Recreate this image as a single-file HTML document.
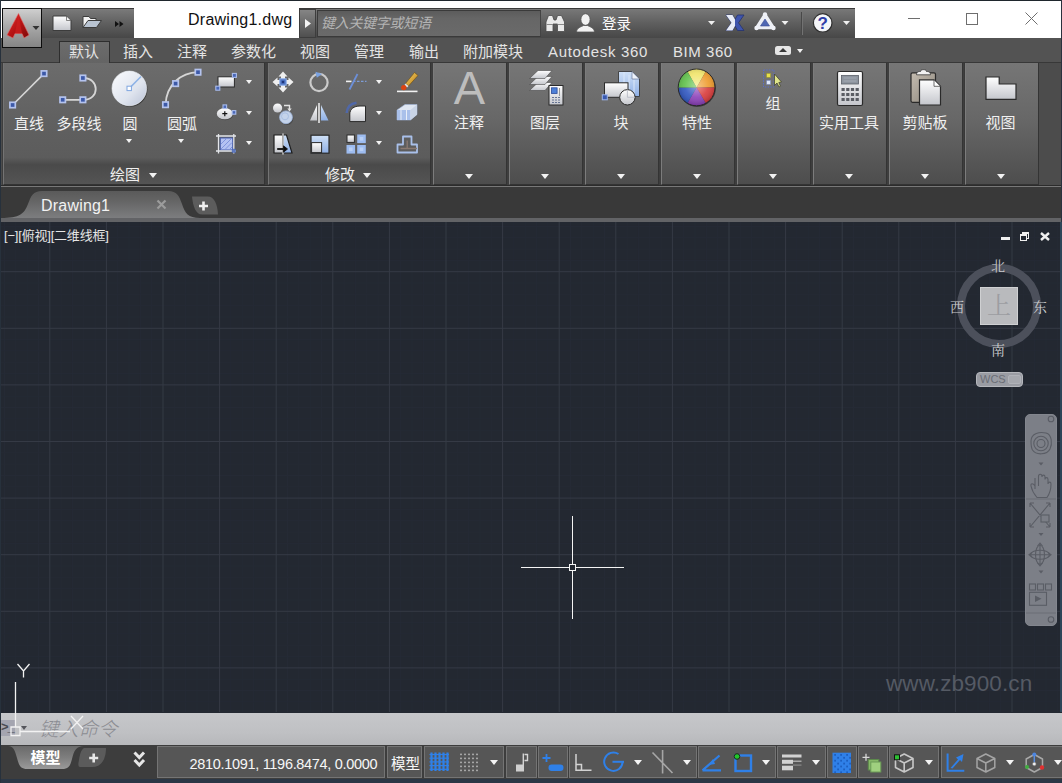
<!DOCTYPE html>
<html lang="zh-CN">
<head>
<meta charset="utf-8">
<title>Drawing1.dwg</title>
<style>
*{box-sizing:border-box;margin:0;padding:0}
html,body{width:1062px;height:783px;overflow:hidden;background:#fff}
body{position:relative;font-family:"Liberation Sans","Noto Sans CJK SC",sans-serif;color:#e8e8e8;font-size:15px}
.abs{position:absolute}
svg{position:absolute;overflow:visible}
/* ---------- title bar ---------- */
#topline{left:0;top:0;width:1062px;height:1px;background:#1f272d}
#leftline{left:0;top:0;width:1px;height:783px;background:#27313c}
#appbtn{left:2px;top:8px;width:40px;height:40px;border:1px solid #0c0c0c;background:linear-gradient(#cfcfcf,#a9a9a9 45%,#858585);z-index:5}
#qat{left:42px;top:8px;width:92px;height:30px;background:linear-gradient(#7a7a7a,#5f5f5f 50%,#474747);border-top:1px solid #3a3a3a}
#title{left:188px;top:9px;height:22px;line-height:22px;font-size:16px;color:#111;white-space:nowrap;letter-spacing:0.25px}
#info{left:299px;top:8px;width:556px;height:30px;background:linear-gradient(#787878,#5e5e5e 50%,#474747);border-top:1px solid #3a3a3a}
#sarrow{left:299px;top:9px;width:17px;height:29px;background:linear-gradient(#858585,#6a6a6a 50%,#4f4f4f);border:1px solid #3d3d3d}
#sbox{left:317px;top:10px;width:224px;height:27px;background:linear-gradient(#5c5c5c,#666 30%,#6a6a6a);border:1px solid #3a3a3a;border-right-color:#444}
#stext{left:321px;top:12px;height:22px;line-height:22px;font-size:14px;font-style:italic;color:#b4b4b4;white-space:nowrap;letter-spacing:-0.3px}
/* ---------- ribbon tabs ---------- */
#tabrow{left:1px;top:38px;width:1061px;height:25px;background:#535353;border-bottom:1px solid #383838}
.rt{position:absolute;top:41px;height:22px;line-height:22px;font-size:15px;color:#e4e4e4;white-space:nowrap}
#acttab{left:59px;top:41px;width:51px;height:22px;background:linear-gradient(#6c6c6c,#646464);border:1px solid #2e2e2e;border-bottom:none}
/* ---------- ribbon ---------- */
#ribbon{left:1px;top:63px;width:1061px;height:122px;background:#4c4c4c}
.panel{position:absolute;top:63px;height:122px;background:linear-gradient(#767676,#676767 47%,#4d4d4d 100%);border-left:1px solid #7c7c7c;border-right:1px solid #343434;border-bottom:1px solid #343434;box-shadow:2px 0 0 #3e3e3e,-1px 0 0 #3e3e3e}
.panel.sm{background:linear-gradient(#6c6c6c 0,#606060 50%,#5c5c5c 78%,#4a4a4a 84%,#545454 100%);border-left-color:#747474}
.plabel{position:absolute;font-size:15px;color:#f0f0f0;white-space:nowrap;text-align:center;line-height:20px}
.tri{position:absolute;width:0;height:0;border-left:4px solid transparent;border-right:4px solid transparent;border-top:5px solid #f2f2f2}
.tri.s{border-left-width:3.5px;border-right-width:3.5px;border-top-width:4px}
#under{left:1px;top:185px;width:1061px;height:33px;background:#393939;border-top:1px solid #2c2c2c}
#under2{left:1px;top:186px;width:1061px;height:1px;background:#787878}
#underline{left:1px;top:218px;width:1061px;height:4px;background:#626366}
/* ---------- drawing ---------- */
#draw{left:1px;top:222px;width:1061px;height:491px;background:#232831;overflow:hidden}
.vc{font-size:14px;line-height:18px;color:#c9cacc;font-family:"Liberation Serif","Noto Serif CJK SC",serif}
/* ---------- cmd ---------- */

#cmd{left:0;top:713px;width:1062px;height:33px;background:linear-gradient(#c6c7ca,#bfc0c3 60%,#b6b7ba)}
#status{left:0;top:745px;width:1062px;height:38px;background:#3d3d3d}
#sbottom{left:0;top:779px;width:1062px;height:4px;background:#2b3746}
.sg{position:absolute;top:746px;height:32px;background:#565656;border:1px solid #747474}
.st{position:absolute;width:0;height:0;border-left:4.5px solid transparent;border-right:4.5px solid transparent;border-top:5.5px solid #f4f4f4;top:760px}
</style>
</head>
<body>
<div class="abs" id="topline"></div>
<div class="abs" id="qat"></div>
<div class="abs" id="appbtn"></div>
<div class="abs" id="title">Drawing1.dwg</div>
<div class="abs" id="info"></div>
<div class="abs" id="sarrow"></div>
<div class="abs" id="sbox"></div>
<div class="abs" id="stext">键入关键字或短语</div>

<div class="abs" style="left:602px;top:13px;font-size:14.5px;line-height:22px;color:#fafafa;white-space:nowrap">登录</div>
<div class="abs" id="tabrow"></div>
<div class="abs" id="acttab"></div>
<div class="abs" id="ribbon"></div>

<!-- ribbon tab labels -->
<div class="rt" style="left:69px">默认</div>
<div class="rt" style="left:123px">插入</div>
<div class="rt" style="left:177px">注释</div>
<div class="rt" style="left:231px">参数化</div>
<div class="rt" style="left:300px">视图</div>
<div class="rt" style="left:354px">管理</div>
<div class="rt" style="left:409px">输出</div>
<div class="rt" style="left:463px">附加模块</div>
<div class="rt" style="left:548px;letter-spacing:0.7px">Autodesk 360</div>
<div class="rt" style="left:673px;letter-spacing:0.55px">BIM 360</div>
<div class="abs" style="left:775px;top:46px;width:16px;height:9px;background:#e6e6e6;border-radius:2.5px"></div>
<div class="abs" style="left:779px;top:48px;width:0;height:0;border-left:4px solid transparent;border-right:4px solid transparent;border-bottom:4px solid #3a3a3a"></div>
<div class="tri s" style="left:797px;top:49px"></div>

<!-- ribbon panels -->
<div class="panel sm" style="left:3px;width:262px"></div>
<div class="panel sm" style="left:268px;width:163px"></div>
<div class="panel" style="left:433px;width:74px"></div>
<div class="panel" style="left:509px;width:74px"></div>
<div class="panel" style="left:585px;width:74px"></div>
<div class="panel" style="left:661px;width:74px"></div>
<div class="panel" style="left:737px;width:74px"></div>
<div class="panel" style="left:813px;width:74px"></div>
<div class="panel" style="left:889px;width:74px"></div>
<div class="panel" style="left:965px;width:74px;box-shadow:-1px 0 0 #383838"></div>

<!-- big panel labels -->
<div class="plabel" style="left:432px;top:113px;width:74px">注释</div>
<div class="plabel" style="left:508px;top:113px;width:74px">图层</div>
<div class="plabel" style="left:584px;top:113px;width:74px">块</div>
<div class="plabel" style="left:660px;top:113px;width:74px">特性</div>
<div class="plabel" style="left:736px;top:94px;width:74px">组</div>
<div class="plabel" style="left:812px;top:113px;width:74px">实用工具</div>
<div class="plabel" style="left:888px;top:113px;width:74px">剪贴板</div>
<div class="plabel" style="left:964px;top:113px;width:73px">视图</div>
<div class="tri" style="left:465px;top:174px"></div>
<div class="tri" style="left:541px;top:174px"></div>
<div class="tri" style="left:617px;top:174px"></div>
<div class="tri" style="left:693px;top:174px"></div>
<div class="tri" style="left:769px;top:174px"></div>
<div class="tri" style="left:845px;top:174px"></div>
<div class="tri" style="left:921px;top:174px"></div>
<div class="tri" style="left:997px;top:174px"></div>

<!-- draw panel labels -->
<div class="plabel" style="left:9px;top:114px;width:40px">直线</div>
<div class="plabel" style="left:52px;top:114px;width:54px">多段线</div>
<div class="plabel" style="left:119px;top:114px;width:22px">圆</div>
<div class="plabel" style="left:164px;top:114px;width:36px">圆弧</div>
<div class="tri s" style="left:126px;top:139px"></div>
<div class="tri s" style="left:178px;top:139px"></div>
<div class="plabel" style="left:103px;top:165px;width:44px">绘图</div>
<div class="tri" style="left:149px;top:173px"></div>
<div class="plabel" style="left:318px;top:165px;width:44px">修改</div>
<div class="tri" style="left:363px;top:173px"></div>
<div class="tri s" style="left:246px;top:80px"></div>
<div class="tri s" style="left:246px;top:111px"></div>
<div class="tri s" style="left:246px;top:141px"></div>
<div class="tri s" style="left:376px;top:80px"></div>
<div class="tri s" style="left:376px;top:111px"></div>
<div class="tri s" style="left:376px;top:141px"></div>
<div class="abs" id="under"></div>
<div class="abs" id="under2"></div>
<div class="abs" id="underline"></div>

<!-- title + ribbon icons -->
<svg width="1062" height="190" viewBox="0 0 1062 190" style="left:0;top:0;z-index:6">
<defs>
<linearGradient id="gw" x1="0" y1="0" x2="0" y2="1"><stop offset="0" stop-color="#ffffff"/><stop offset="1" stop-color="#c4c6cc"/></linearGradient>
<linearGradient id="gw2" x1="0" y1="0" x2="1" y2="1"><stop offset="0" stop-color="#fbfcfe"/><stop offset="0.6" stop-color="#dfe4ee"/><stop offset="1" stop-color="#b9c2d6"/></linearGradient>
<linearGradient id="gb" x1="0" y1="0" x2="0" y2="1"><stop offset="0" stop-color="#cfe0f6"/><stop offset="1" stop-color="#8fb0e6"/></linearGradient>
<linearGradient id="gclip" x1="0" y1="0" x2="1" y2="1"><stop offset="0" stop-color="#c4bcb0"/><stop offset="1" stop-color="#8b857b"/></linearGradient>
<linearGradient id="gbrush" x1="0" y1="0" x2="1" y2="1"><stop offset="0" stop-color="#f5d36a"/><stop offset="1" stop-color="#b97a12"/></linearGradient>
<linearGradient id="gred" x1="0" y1="0" x2="1" y2="1"><stop offset="0" stop-color="#e23030"/><stop offset="0.5" stop-color="#b81414"/><stop offset="1" stop-color="#7c0a0a"/></linearGradient>
<radialGradient id="gwheel" cx="0.5" cy="0.45" r="0.55"><stop offset="0" stop-color="#fff" stop-opacity="0.450"/><stop offset="0.6" stop-color="#fff" stop-opacity="0.100"/><stop offset="1" stop-color="#000" stop-opacity="0.180"/></radialGradient>
</defs>

<!-- app button logo -->
<path d="M18.500 13.500 L29 35 L24 38 L22 33.500 H15 L13 38 L7 35 Z" fill="url(#gred)" stroke="#e46a6a" stroke-width="0.600"/>
<path d="M18.500 14 L22 33.500 H15 Z" fill="#cf2020" opacity="0.700"/>
<path d="M32.500 26 H39.500 L36 30 Z" fill="#333"/>

<!-- QAT icons -->
<path d="M53 16 H66.500 L71 20.500 V30.500 H53 Z" fill="url(#gw)" stroke="#3c3c3c" stroke-width="1"/>
<path d="M66.500 16 V20.500 H71 Z" fill="#f4f4f4" stroke="#555" stroke-width="0.700"/>
<path d="M83 27.500 V16.500 H89 L90.500 18.500 H96 V21" fill="#f2f2f2" stroke="#3c3c3c" stroke-width="1"/>
<path d="M83 27.500 L88 20.500 H101.500 L96.500 27.500 Z" fill="#b9c4d2" stroke="#3c3c3c" stroke-width="1"/>
<path d="M115 21 L119 24 L115 27 Z M119.500 21 L123.500 24 L119.500 27 Z" fill="#111"/>

<!-- search arrow -->
<path d="M305 19 L311 23.500 L305 28 Z" fill="#f4f4f4"/>

<!-- binoculars -->
<path d="M546 31.500 V22 L548.500 15.500 H552.500 L554 20 H556 L557.500 15.500 H561.500 L564.500 22 V31.500 H557.500 V24 H553 V31.500 Z" fill="#e9e9e9" stroke="#4a4a4a" stroke-width="0.800"/>
<path d="M546.500 24.500 H553 M557.500 24.500 H564" stroke="#8a8a8a" stroke-width="1"/>
<!-- user -->
<ellipse cx="585.500" cy="19.500" rx="4.600" ry="5.800" fill="#f2f2f2" stroke="#555" stroke-width="0.800"/>
<path d="M576.500 32 C577 27.500 581 27 583.500 25.500 H587.500 C590 27 594 27.500 594.500 32 Z" fill="#f2f2f2" stroke="#555" stroke-width="0.800"/>
<!-- small tris -->
<path d="M708 21 H715 L711.500 25 Z" fill="#f0f0f0"/>
<path d="M781.500 21 H788.500 L785 25 Z" fill="#f0f0f0"/>
<path d="M843 21 H850 L846.500 25 Z" fill="#f0f0f0"/>
<!-- exchange X -->
<path d="M726 15 H732.500 L735 19.500 L737.500 15 H744 L738.500 22.800 L744 30.500 H737.500 L735 26 L732.500 30.500 H726 L731.500 22.800 Z" fill="#3f55ad" stroke="#26326e" stroke-width="0.800"/>
<path d="M726 15 H732.500 L735 19.500 L735 26 L732.500 30.500 H726 L731.500 22.800 Z" fill="#e8ecf6"/>
<!-- A360 triangle -->
<path d="M765 15 L773 27.500 H757 Z" fill="#eef0f6" stroke="#eef0f6" stroke-width="3.400" stroke-linejoin="round"/><path d="M765 19 L769.500 26 H760.500 Z" fill="#5068b4" stroke="#3a4c94" stroke-width="0.600"/>
<circle cx="765" cy="14.500" r="2.200" fill="#f0f2f8"/><circle cx="756.500" cy="28" r="2.200" fill="#f0f2f8"/><circle cx="773.500" cy="28" r="2.200" fill="#f0f2f8"/>
<!-- separator -->
<path d="M801.500 12 V35" stroke="#484848" stroke-width="1"/><path d="M802.500 12 V35" stroke="#727272" stroke-width="1"/>
<!-- help -->
<circle cx="822.700" cy="22.900" r="9.300" fill="#f4f5f8" stroke="#2e2e2e" stroke-width="1.200"/>
<text x="822.700" y="29" font-family="Liberation Sans, sans-serif" font-weight="bold" font-size="17" fill="#2f3ea8" text-anchor="middle">?</text>

<!-- window controls -->
<path d="M908 18.500 H920" stroke="#6e6e6e" stroke-width="1"/>
<rect x="966.500" y="13.500" width="11" height="11" fill="none" stroke="#6e6e6e" stroke-width="1"/>
<path d="M1025.500 12.500 L1037.500 24.500 M1037.500 12.500 L1025.500 24.500" stroke="#6e6e6e" stroke-width="1"/>

<!-- ===== Draw panel ===== -->
<path d="M12.600 105 L44 73.600" stroke="#d6d6d6" stroke-width="1.600"/>
<rect x="9.9" y="102.3" width="5.400" height="5.400" fill="#3c59a8" stroke="#b4c3ee" stroke-width="1.700"/><rect x="41.3" y="70.9" width="5.400" height="5.400" fill="#3c59a8" stroke="#b4c3ee" stroke-width="1.700"/>
<path d="M62.700 99.800 H82.900 C100 100.500 100 77.500 82.900 78" stroke="#d6d6d6" stroke-width="1.800" fill="none"/>
<rect x="60.0" y="97.1" width="5.400" height="5.400" fill="#3c59a8" stroke="#b4c3ee" stroke-width="1.700"/><rect x="80.2" y="97.1" width="5.400" height="5.400" fill="#3c59a8" stroke="#b4c3ee" stroke-width="1.700"/><rect x="80.2" y="75.3" width="5.400" height="5.400" fill="#3c59a8" stroke="#b4c3ee" stroke-width="1.700"/>
<circle cx="130" cy="89.300" r="17.500" fill="#2e2e2e" opacity="0.700"/>
<circle cx="129.300" cy="88.400" r="17.300" fill="url(#gw2)" stroke="#eef1f6" stroke-width="0.600"/>
<path d="M129.300 88.400 L141 76.500" stroke="#8db3e6" stroke-width="1.500"/>
<rect x="127" y="86.200" width="4.400" height="4.400" fill="#fff" stroke="#7fa6e0" stroke-width="1"/>
<path d="M165.500 104.700 C166.500 84 181 73 198 72.200" stroke="#d6d6d6" stroke-width="1.800" fill="none"/>
<rect x="162.8" y="102.0" width="5.400" height="5.400" fill="#3c59a8" stroke="#b4c3ee" stroke-width="1.700"/><rect x="172.9" y="80.9" width="5.400" height="5.400" fill="#3c59a8" stroke="#b4c3ee" stroke-width="1.700"/><rect x="195.3" y="69.5" width="5.400" height="5.400" fill="#3c59a8" stroke="#b4c3ee" stroke-width="1.700"/>
<!-- rectangle -->
<rect x="218" y="76.800" width="16.400" height="10.200" fill="url(#gw)" stroke="#2a2a2a" stroke-width="1"/>
<rect x="232.400" y="73.400" width="4" height="4" fill="#4a68b8" stroke="#a9bcec" stroke-width="1.100"/>
<rect x="215.800" y="86.200" width="4" height="4" fill="#4a68b8" stroke="#a9bcec" stroke-width="1.100"/>
<!-- ellipse -->
<ellipse cx="225.300" cy="114.800" rx="8" ry="5.400" fill="#4a4a4a"/>
<ellipse cx="224.800" cy="113.700" rx="8" ry="5.600" fill="url(#gw)"/>
<path d="M224.800 111.200 V116.200 M222.300 113.700 H227.300" stroke="#111" stroke-width="1.200"/>
<rect x="223" y="104.900" width="3.600" height="3.600" fill="#4a68b8" stroke="#a9bcec" stroke-width="1.100"/>
<rect x="232.200" y="110.600" width="3.600" height="3.600" fill="#4a68b8" stroke="#a9bcec" stroke-width="1.100"/>
<!-- hatch -->
<rect x="220.300" y="138" width="12.400" height="12" fill="#b4c2f2" stroke="#485fae" stroke-width="1"/>
<path d="M221 144 L226.500 138.500 M221 149 L231.500 138.500 M225 149.500 L232 142.500 M229.500 149.500 L232 147" stroke="#7f93dc" stroke-width="1"/>
<path d="M216 136 H236 M216 151 H236 M218.500 134 V153.500 M233.800 134 V153.500" stroke="#e4e6ea" stroke-width="1.300" fill="none"/>
<rect x="231.800" y="148.800" width="4" height="4" fill="#4a68b8" opacity="0.850"/>

<!-- ===== Modify panel ===== -->
<!-- move -->
<path d="M283 71.500 L287.500 76.500 H285 V80 H288.500 V77.500 L293.500 82 L288.500 86.500 V84 H285 V87.500 H287.500 L283 92.500 L278.500 87.500 H281 V84 H277.500 V86.500 L272.500 82 L277.500 77.500 V80 H281 V76.500 H278.500 Z" fill="#efefef"/>
<rect x="279.800" y="78.800" width="6.400" height="6.400" fill="#4d74c4" stroke="#8fb0ea" stroke-width="1"/>
<rect x="281.800" y="80.800" width="2.400" height="2.400" fill="#1e357a"/>
<!-- rotate -->
<circle cx="319" cy="82.500" r="8.600" fill="none" stroke="#cbcbcb" stroke-width="2.200"/>
<path d="M315.500 71.800 L322 74 L316.800 77.800 Z" fill="#7aa2e2"/>
<!-- trim -->
<path d="M346 81.400 H351.500" stroke="#f0f0f0" stroke-width="1.600"/>
<path d="M353 81.400 H366.500" stroke="#7d9cd6" stroke-width="1.200" stroke-dasharray="2.500 1.500"/>
<path d="M349.500 89.500 L357.500 74" stroke="#6c8fd8" stroke-width="1.800"/>
<!-- erase -->
<path d="M397 91.400 H417.500" stroke="#f2f2f2" stroke-width="1.600"/>
<path d="M414.500 72.500 L418 75.500 L408.500 86 L405.500 83.500 Z" fill="url(#gbrush)" stroke="#6a4a10" stroke-width="0.600"/>
<path d="M405.500 83.500 L408.500 86 L407 87.500 L404.500 85 Z" fill="#e8e8e8"/>
<circle cx="403.800" cy="87.600" r="2.700" fill="#dc4412"/>
<!-- copy -->
<circle cx="277.600" cy="108" r="4.600" fill="url(#gw)"/>
<circle cx="287" cy="118.500" r="6.400" fill="#3c3c3c" opacity="0.600"/>
<circle cx="286" cy="117.300" r="6.400" fill="#c4d3ea" stroke="#9fb6dc" stroke-width="0.800"/>
<circle cx="285" cy="116.300" r="3.500" fill="none" stroke="#a9bfe2" stroke-width="1"/>
<path d="M284 105.500 H289.500 V109" stroke="#e2e2e2" stroke-width="1.400" fill="none"/><path d="M287.300 108.500 H291.700 L289.500 111.500 Z" fill="#e2e2e2"/>
<!-- mirror -->
<path d="M310 120.500 H317 V105 Z" fill="url(#gw)"/>
<path d="M321 105 V120.500 H328.500 Z" fill="url(#gb)"/>
<path d="M319 103 V123" stroke="#f0f0f0" stroke-width="1.500"/>
<!-- fillet -->
<path d="M349.800 121.600 V114 C349.800 109 354 106 360 106 H365.500 V121.600 Z" fill="url(#gw)" stroke="#2a2a2a" stroke-width="1"/>
<path d="M346.700 113 C347 107.500 350.500 103.500 356.500 102.700" stroke="#5068a8" stroke-width="2.600" fill="none"/>
<!-- explode / box -->
<path d="M397 110 L405 104.500 H417 V114.500 L410.500 120 H397 Z" fill="#dfe6f2" stroke="#9fb4d8" stroke-width="0.600"/>
<path d="M397 110 H410.500 V120 H397 Z" fill="#a9c0ea"/>
<path d="M410.500 110 L417 104.500 V114.500 L410.500 120 Z" fill="#c9d4e6"/>
<path d="M401 110 V120 M406.500 110 V120" stroke="#e8eef8" stroke-width="1"/>
<!-- stretch -->
<path d="M274 135 H283 V153 H274 Z" fill="url(#gw)" stroke="#1e1e1e" stroke-width="1.200"/>
<path d="M283 135 H286.500 L292 153 H283 Z" fill="url(#gb)" stroke="#1e1e1e" stroke-width="1.200"/>
<path d="M283 133.500 V154.500" stroke="#f0f0f0" stroke-width="1.200"/>
<path d="M277.500 148.500 H283.500 V145.800 L287.500 149 L283.500 152.200 V149.500 H277.500 Z" fill="#0c0c0c" stroke="#0c0c0c" stroke-width="0.800"/>
<!-- scale -->
<rect x="311" y="135.200" width="18" height="18" fill="url(#gb)" stroke="#2a2a2a" stroke-width="1.200"/>
<rect x="311.600" y="142.600" width="10" height="10" fill="url(#gw)" stroke="#2a2a2a" stroke-width="1"/>
<!-- array -->
<rect x="347" y="135" width="7.400" height="7.400" fill="url(#gw)" stroke="#2c2c2c" stroke-width="1"/>
<rect x="357.200" y="134.500" width="8.600" height="8.600" fill="#9dbcf0"/>
<rect x="346.500" y="145" width="8.600" height="8.600" fill="#9dbcf0"/>
<rect x="357.200" y="145" width="8.600" height="8.600" fill="#9dbcf0"/>
<rect x="359.700" y="137" width="3.600" height="3.600" fill="#b9d0f6"/><rect x="349" y="147.500" width="3.600" height="3.600" fill="#b9d0f6"/><rect x="359.700" y="147.500" width="3.600" height="3.600" fill="#b9d0f6"/>
<!-- offset -->
<path d="M403 136.500 H411.500 V144.500 H417 V152.500 H397.500 V144.500 H403 Z" fill="none" stroke="#a9c0ea" stroke-width="1.800" stroke-linejoin="round"/>
<path d="M407.200 140.500 V148.500 M400.500 148.500 H417" stroke="#8a7a72" stroke-width="1.300"/>

<!-- ===== big panels ===== -->
<text x="469.500" y="104.400" font-family="Liberation Sans, sans-serif" font-size="47" fill="#bdbdbd" text-anchor="middle">A</text>
<!-- layers -->
<path d="M538 82.500 H552 L545 90.500 H529.500 Z" fill="url(#gw)" stroke="#4a4a4a" stroke-width="0.600"/>
<path d="M538 76.500 H552 L545 84.500 H529.500 Z" fill="url(#gw)" stroke="#4a4a4a" stroke-width="0.600"/>
<path d="M538 70.500 H552 L545 78.500 H529.500 Z" fill="url(#gw)" stroke="#4a4a4a" stroke-width="0.600"/>
<rect x="549" y="85.500" width="14" height="19.500" fill="url(#gw)" stroke="#2a2a2a" stroke-width="1"/>
<rect x="551.500" y="87.800" width="5.600" height="5.600" fill="#4d80d8" stroke="#2a4a9a" stroke-width="0.800"/>
<path d="M559.500 88 V96" stroke="#9a9a9a" stroke-width="1"/>
<path d="M552 97.500 H560 M552 100 H560 M552 102.500 H560" stroke="#5a6a8a" stroke-width="0.900" stroke-dasharray="2 1"/>
<!-- block -->
<path d="M618.500 71.500 H632 L639.500 79 V96.500 H618.500 Z" fill="url(#gb)" stroke="#3a3a3a" stroke-width="0.900"/>
<path d="M632 71.500 V79 H639.500 Z" fill="#eef3fb" stroke="#5a6a8a" stroke-width="0.600"/>
<path d="M624 72 V96 M629 75 V96 M634 80 V96" stroke="#dbe7f8" stroke-width="1"/>
<rect x="604.500" y="82.800" width="23.500" height="14.500" fill="url(#gw)" stroke="#2a2a2a" stroke-width="1"/>
<circle cx="627.400" cy="97.300" r="7.700" fill="url(#gw)" stroke="#2a2a2a" stroke-width="1"/>
<path d="M627.400 89.600 V97.300 H635" stroke="#b4b8c2" stroke-width="0.800" fill="none"/>
<rect x="602.300" y="94.800" width="5" height="5" fill="#3a5ab0" stroke="#9db4ea" stroke-width="1"/>
<!-- color wheel -->
<circle cx="697.200" cy="88.200" r="18.600" fill="#2b2b2b" opacity="0.800"/>
<g transform="translate(696.600 87.400)">
<path d="M0 0 L-9.200 -15.930 A18.400 18.400 0 0 1 9.200 -15.930 Z" fill="#f0e468"/>
<path d="M0 0 L9.200 -15.930 A18.400 18.400 0 0 1 18.400 0 Z" fill="#ee9a2a"/>
<path d="M0 0 L18.400 0 A18.400 18.400 0 0 1 9.200 15.930 Z" fill="#d83a3a"/>
<path d="M0 0 L9.200 15.930 A18.400 18.400 0 0 1 -9.200 15.930 Z" fill="#8a3fb8"/>
<path d="M0 0 L-9.200 15.930 A18.400 18.400 0 0 1 -18.400 0 Z" fill="#2f56c0"/>
<path d="M0 0 L-18.400 0 A18.400 18.400 0 0 1 -9.200 -15.930 Z" fill="#5fc04a"/>
<circle r="18.400" fill="none" stroke="#2a2a2a" stroke-width="1"/>
<circle r="18" fill="url(#gwheel)"/>
</g>
<!-- group -->
<rect x="763.500" y="70" width="10.500" height="17" fill="none" stroke="#5a6ec8" stroke-width="1" stroke-dasharray="1.500 1.200"/>
<rect x="766.500" y="73.300" width="4.200" height="4.200" fill="#e8e04a" stroke="#8a8a2a" stroke-width="0.500"/>
<rect x="766.500" y="80.300" width="4.200" height="4.200" fill="#dfe8fa" stroke="#6a7ab0" stroke-width="0.500"/>
<path d="M774.500 74 V85.500 L777 83 L779 87 L780.500 86.200 L778.800 82.500 L781.500 82 Z" fill="#dfe48a" stroke="#3a3a2a" stroke-width="0.700"/>
<!-- calculator -->
<rect x="837.500" y="71.500" width="25" height="34" rx="1.500" fill="url(#gw)" stroke="#2a2a2a" stroke-width="1.200"/>
<rect x="841.500" y="75.500" width="17" height="8.500" fill="#8d949e" stroke="#5a5f68" stroke-width="0.800"/>
<path d="M843.500 78 H856.500 M843.500 81 H856.500" stroke="#a9b0ba" stroke-width="0.800"/>
<g fill="#5a5d64">
<rect x="841.500" y="88" width="3.200" height="3"/><rect x="846.200" y="88" width="3.200" height="3"/><rect x="850.900" y="88" width="3.200" height="3"/><rect x="855.600" y="88" width="3.200" height="3"/>
<rect x="841.500" y="93" width="3.200" height="3"/><rect x="846.200" y="93" width="3.200" height="3"/><rect x="850.900" y="93" width="3.200" height="3"/><rect x="855.600" y="93" width="3.200" height="3"/>
<rect x="841.500" y="98" width="3.200" height="3"/><rect x="846.200" y="98" width="3.200" height="3"/><rect x="850.900" y="98" width="3.200" height="3"/><rect x="855.600" y="98" width="3.200" height="3"/>
</g>
<!-- clipboard -->
<rect x="911" y="72.800" width="24.500" height="29.500" rx="1.500" fill="url(#gclip)" stroke="#2a2a2a" stroke-width="1.200"/>
<path d="M916.500 74.800 C916.500 71.500 919 71.500 920.500 71.500 C920.500 69 926.500 69 926.500 71.500 C928 71.500 930.500 71.500 930.500 74.800 Z" fill="#f2f2f2" stroke="#3a3a3a" stroke-width="0.800"/>
<path d="M919.500 79.800 H934 L940.500 86.300 V105 H919.500 Z" fill="url(#gw)" stroke="#2a2a2a" stroke-width="1.200"/>
<path d="M934 79.800 V86.300 H940.500 Z" fill="#fff" stroke="#4a4a4a" stroke-width="0.800"/>
<!-- view -->
<path d="M986 77 H999.200 V84 H1016 V99.400 H986 Z" fill="url(#gw)" stroke="#2a2a2a" stroke-width="1.200"/>
</svg>

<!-- doc tabs -->
<svg width="240" height="32" viewBox="0 188 240 32" style="left:0;top:188px">
<defs><linearGradient id="dtg" x1="0" y1="0" x2="0" y2="1"><stop offset="0" stop-color="#5a5a5a"/><stop offset="0.35" stop-color="#646464"/><stop offset="1" stop-color="#7c7d7f"/></linearGradient></defs>
<path d="M1 218 C20 218 24 214 28 204 C31 196 33 191 42 191 H168 C177 191 179 196 182 204 C185 213 188 218 200 218 Z" fill="url(#dtg)"/>
<path d="M157.500 200.500 L165.500 208.500 M165.500 200.500 L157.500 208.500" stroke="#9c9c9c" stroke-width="2.200" fill="none"/>
<path d="M192 196.500 H208 C214 196.500 217.500 204 218 214.500 H202 C196 214.500 193 207 192 196.500 Z" fill="#5c5c5c"/>
<path d="M203.500 201.500 V210.500 M199 206 H208" stroke="#f0f0f0" stroke-width="2.600" fill="none"/>
</svg>
<div class="abs" style="left:41px;top:195px;font-size:16px;line-height:22px;color:#f2f2f2;white-space:nowrap;letter-spacing:0.2px">Drawing1</div>
<div class="abs" id="draw"><svg width="1061" height="490" style="left:0;top:0"><g stroke="#252a35" stroke-width="1"><line x1="3.5" y1="0" x2="3.5" y2="490"/><line x1="14.8" y1="0" x2="14.8" y2="490"/><line x1="26.2" y1="0" x2="26.2" y2="490"/><line x1="37.5" y1="0" x2="37.5" y2="490"/><line x1="60.1" y1="0" x2="60.1" y2="490"/><line x1="71.4" y1="0" x2="71.4" y2="490"/><line x1="82.8" y1="0" x2="82.8" y2="490"/><line x1="94.1" y1="0" x2="94.1" y2="490"/><line x1="116.7" y1="0" x2="116.7" y2="490"/><line x1="128.0" y1="0" x2="128.0" y2="490"/><line x1="139.4" y1="0" x2="139.4" y2="490"/><line x1="150.7" y1="0" x2="150.7" y2="490"/><line x1="173.3" y1="0" x2="173.3" y2="490"/><line x1="184.6" y1="0" x2="184.6" y2="490"/><line x1="196.0" y1="0" x2="196.0" y2="490"/><line x1="207.3" y1="0" x2="207.3" y2="490"/><line x1="229.9" y1="0" x2="229.9" y2="490"/><line x1="241.2" y1="0" x2="241.2" y2="490"/><line x1="252.6" y1="0" x2="252.6" y2="490"/><line x1="263.9" y1="0" x2="263.9" y2="490"/><line x1="286.5" y1="0" x2="286.5" y2="490"/><line x1="297.8" y1="0" x2="297.8" y2="490"/><line x1="309.2" y1="0" x2="309.2" y2="490"/><line x1="320.5" y1="0" x2="320.5" y2="490"/><line x1="343.1" y1="0" x2="343.1" y2="490"/><line x1="354.4" y1="0" x2="354.4" y2="490"/><line x1="365.8" y1="0" x2="365.8" y2="490"/><line x1="377.1" y1="0" x2="377.1" y2="490"/><line x1="399.7" y1="0" x2="399.7" y2="490"/><line x1="411.0" y1="0" x2="411.0" y2="490"/><line x1="422.4" y1="0" x2="422.4" y2="490"/><line x1="433.7" y1="0" x2="433.7" y2="490"/><line x1="456.3" y1="0" x2="456.3" y2="490"/><line x1="467.6" y1="0" x2="467.6" y2="490"/><line x1="479.0" y1="0" x2="479.0" y2="490"/><line x1="490.3" y1="0" x2="490.3" y2="490"/><line x1="512.9" y1="0" x2="512.9" y2="490"/><line x1="524.2" y1="0" x2="524.2" y2="490"/><line x1="535.6" y1="0" x2="535.6" y2="490"/><line x1="546.9" y1="0" x2="546.9" y2="490"/><line x1="569.5" y1="0" x2="569.5" y2="490"/><line x1="580.8" y1="0" x2="580.8" y2="490"/><line x1="592.2" y1="0" x2="592.2" y2="490"/><line x1="603.5" y1="0" x2="603.5" y2="490"/><line x1="626.1" y1="0" x2="626.1" y2="490"/><line x1="637.4" y1="0" x2="637.4" y2="490"/><line x1="648.8" y1="0" x2="648.8" y2="490"/><line x1="660.1" y1="0" x2="660.1" y2="490"/><line x1="682.7" y1="0" x2="682.7" y2="490"/><line x1="694.0" y1="0" x2="694.0" y2="490"/><line x1="705.4" y1="0" x2="705.4" y2="490"/><line x1="716.7" y1="0" x2="716.7" y2="490"/><line x1="739.3" y1="0" x2="739.3" y2="490"/><line x1="750.6" y1="0" x2="750.6" y2="490"/><line x1="762.0" y1="0" x2="762.0" y2="490"/><line x1="773.3" y1="0" x2="773.3" y2="490"/><line x1="795.9" y1="0" x2="795.9" y2="490"/><line x1="807.2" y1="0" x2="807.2" y2="490"/><line x1="818.6" y1="0" x2="818.6" y2="490"/><line x1="829.9" y1="0" x2="829.9" y2="490"/><line x1="852.5" y1="0" x2="852.5" y2="490"/><line x1="863.8" y1="0" x2="863.8" y2="490"/><line x1="875.2" y1="0" x2="875.2" y2="490"/><line x1="886.5" y1="0" x2="886.5" y2="490"/><line x1="909.1" y1="0" x2="909.1" y2="490"/><line x1="920.4" y1="0" x2="920.4" y2="490"/><line x1="931.8" y1="0" x2="931.8" y2="490"/><line x1="943.1" y1="0" x2="943.1" y2="490"/><line x1="965.7" y1="0" x2="965.7" y2="490"/><line x1="977.0" y1="0" x2="977.0" y2="490"/><line x1="988.4" y1="0" x2="988.4" y2="490"/><line x1="999.7" y1="0" x2="999.7" y2="490"/><line x1="1022.3" y1="0" x2="1022.3" y2="490"/><line x1="1033.6" y1="0" x2="1033.6" y2="490"/><line x1="1045.0" y1="0" x2="1045.0" y2="490"/><line x1="1056.3" y1="0" x2="1056.3" y2="490"/><line x1="0" y1="4.4" x2="1061" y2="4.4"/><line x1="0" y1="15.7" x2="1061" y2="15.7"/><line x1="0" y1="27.1" x2="1061" y2="27.1"/><line x1="0" y1="38.4" x2="1061" y2="38.4"/><line x1="0" y1="61.0" x2="1061" y2="61.0"/><line x1="0" y1="72.3" x2="1061" y2="72.3"/><line x1="0" y1="83.7" x2="1061" y2="83.7"/><line x1="0" y1="95.0" x2="1061" y2="95.0"/><line x1="0" y1="117.6" x2="1061" y2="117.6"/><line x1="0" y1="128.9" x2="1061" y2="128.9"/><line x1="0" y1="140.3" x2="1061" y2="140.3"/><line x1="0" y1="151.6" x2="1061" y2="151.6"/><line x1="0" y1="174.2" x2="1061" y2="174.2"/><line x1="0" y1="185.5" x2="1061" y2="185.5"/><line x1="0" y1="196.9" x2="1061" y2="196.9"/><line x1="0" y1="208.2" x2="1061" y2="208.2"/><line x1="0" y1="230.8" x2="1061" y2="230.8"/><line x1="0" y1="242.1" x2="1061" y2="242.1"/><line x1="0" y1="253.5" x2="1061" y2="253.5"/><line x1="0" y1="264.8" x2="1061" y2="264.8"/><line x1="0" y1="287.4" x2="1061" y2="287.4"/><line x1="0" y1="298.7" x2="1061" y2="298.7"/><line x1="0" y1="310.1" x2="1061" y2="310.1"/><line x1="0" y1="321.4" x2="1061" y2="321.4"/><line x1="0" y1="344.0" x2="1061" y2="344.0"/><line x1="0" y1="355.3" x2="1061" y2="355.3"/><line x1="0" y1="366.7" x2="1061" y2="366.7"/><line x1="0" y1="378.0" x2="1061" y2="378.0"/><line x1="0" y1="400.6" x2="1061" y2="400.6"/><line x1="0" y1="411.9" x2="1061" y2="411.9"/><line x1="0" y1="423.3" x2="1061" y2="423.3"/><line x1="0" y1="434.6" x2="1061" y2="434.6"/><line x1="0" y1="457.2" x2="1061" y2="457.2"/><line x1="0" y1="468.5" x2="1061" y2="468.5"/><line x1="0" y1="479.9" x2="1061" y2="479.9"/></g><g stroke="#353a45" stroke-width="1"><line x1="48.8" y1="0" x2="48.8" y2="490"/><line x1="105.4" y1="0" x2="105.4" y2="490"/><line x1="162.0" y1="0" x2="162.0" y2="490"/><line x1="218.6" y1="0" x2="218.6" y2="490"/><line x1="275.2" y1="0" x2="275.2" y2="490"/><line x1="331.8" y1="0" x2="331.8" y2="490"/><line x1="388.4" y1="0" x2="388.4" y2="490"/><line x1="445.0" y1="0" x2="445.0" y2="490"/><line x1="501.6" y1="0" x2="501.6" y2="490"/><line x1="558.2" y1="0" x2="558.2" y2="490"/><line x1="614.8" y1="0" x2="614.8" y2="490"/><line x1="671.4" y1="0" x2="671.4" y2="490"/><line x1="728.0" y1="0" x2="728.0" y2="490"/><line x1="784.6" y1="0" x2="784.6" y2="490"/><line x1="841.2" y1="0" x2="841.2" y2="490"/><line x1="897.8" y1="0" x2="897.8" y2="490"/><line x1="954.4" y1="0" x2="954.4" y2="490"/><line x1="1011.0" y1="0" x2="1011.0" y2="490"/><line x1="1067.6" y1="0" x2="1067.6" y2="490"/><line x1="0" y1="-6.9" x2="1061" y2="-6.9"/><line x1="0" y1="49.7" x2="1061" y2="49.7"/><line x1="0" y1="106.3" x2="1061" y2="106.3"/><line x1="0" y1="162.9" x2="1061" y2="162.9"/><line x1="0" y1="219.5" x2="1061" y2="219.5"/><line x1="0" y1="276.1" x2="1061" y2="276.1"/><line x1="0" y1="332.7" x2="1061" y2="332.7"/><line x1="0" y1="389.3" x2="1061" y2="389.3"/><line x1="0" y1="445.9" x2="1061" y2="445.9"/><line x1="0" y1="502.5" x2="1061" y2="502.5"/></g></svg>
<div class="abs" style="left:3px;top:5px;font-size:13px;line-height:18px;color:#e6e6e6;white-space:nowrap;letter-spacing:-0.2px" id="vplabel">[−][俯视][二维线框]</div>
<!-- crosshair -->
<div class="abs" style="left:520px;top:345px;width:103px;height:1px;background:#f4f4f4"></div>
<div class="abs" style="left:571px;top:294px;width:1px;height:103px;background:#f4f4f4"></div>
<div class="abs" style="left:568px;top:342px;width:7px;height:7px;border:1px solid #f4f4f4;background:#232831"></div>
<!-- window controls in viewport -->
<div class="abs" style="left:1000px;top:15px;width:9px;height:3px;background:#f0f0f0"></div>
<div class="abs" style="left:1021px;top:10px;width:7px;height:7px;border:1.5px solid #f0f0f0;border-top-width:2px"></div>
<div class="abs" style="left:1019px;top:12px;width:7px;height:7px;border:1.5px solid #f0f0f0;border-top-width:2px;background:#232831"></div>
<svg width="10" height="9" style="left:1039px;top:10px"><path d="M1 1 L9 8 M9 1 L1 8" stroke="#f0f0f0" stroke-width="2.4" fill="none"/></svg>
<!-- viewcube -->
<div class="abs" style="left:956px;top:42px;width:84px;height:84px;border-radius:50%;border:8px solid #4c505b"></div>
<div class="abs" style="left:979px;top:65px;width:38px;height:38px;background:#b9babd;border:1px solid #cfd0d2"></div>
<div class="abs" style="left:979px;top:65px;width:38px;height:38px;line-height:38px;text-align:center;font-size:24px;color:#9c9da1;font-family:'Liberation Serif','Noto Serif CJK SC',serif">上</div>
<div class="abs vc" style="left:990px;top:36px">北</div>
<div class="abs vc" style="left:990px;top:120px">南</div>
<div class="abs vc" style="left:949px;top:77px">西</div>
<div class="abs vc" style="left:1032px;top:77px">东</div>
<div class="abs" style="left:975px;top:150px;width:47px;height:15px;border-radius:4px;background:#9a9ca3;border:1px solid #b5b7bc"></div>
<div class="abs" style="left:979px;top:150px;font-size:11px;line-height:15px;color:#6b6e76">WCS</div>
<div class="abs" style="left:1007px;top:153px;width:13px;height:9px;border-radius:2px;background:#a6a8ae;border:1px solid #b0b2b8"></div>
<!-- nav bar -->
<div class="abs" style="left:1024px;top:192px;width:32px;height:212px;border-radius:5px;background:#7c7f87;border:1px solid #83868e"></div>
<!-- watermark -->
<div class="abs" id="wm" style="left:885px;top:448px;font-size:22.500px;line-height:28px;color:#555a64;white-space:nowrap;letter-spacing:0.100px">www.zb900.cn</div>
</div>
<div class="abs" id="cmd"></div>
<!-- command line content -->
<div class="abs" style="left:0;top:720px;width:15px;height:16px;background:#a4a5b0"></div>
<div class="abs" style="left:1px;top:719px;font-size:13px;line-height:16px;color:#4a4b52;font-weight:bold;letter-spacing:-1px">&gt;_</div>
<div class="abs" style="left:21px;top:726px;width:0;height:0;border-left:3.5px solid transparent;border-right:3.5px solid transparent;border-top:4px solid #55565c"></div>
<div class="abs" style="left:39px;top:716px;font-size:19.5px;line-height:26px;font-style:italic;font-weight:300;color:#8b8c92;white-space:nowrap;letter-spacing:0.2px">键入命令</div>
<!-- UCS icon -->
<svg width="100" height="80" style="left:0;top:655px"><g stroke="#f2f2f2" stroke-width="1.3" fill="none"><path d="M15.5 27 V72 M20 76.5 H70 M11 72 H20 V80.5 H11 Z"/><path d="M17.5 9 L23.5 16 L29.5 9 M23.5 16 V22.500"/><path d="M71 61 L83 74 M83 61 L71 74"/></g></svg>

<div class="abs" id="status"></div>
<div class="abs" id="sbottom"></div>
<!-- model tab -->
<svg width="160" height="38" style="left:0;top:745px">
<defs><linearGradient id="mtg" x1="0" y1="0" x2="0" y2="1"><stop offset="0" stop-color="#6a6a6a"/><stop offset="0.5" stop-color="#7e7e7e"/><stop offset="1" stop-color="#9a9a9a"/></linearGradient></defs>
<path d="M8 1 C14 1 15 6 17 13 C19 21 21 24 27 24 H62 C69 24 70 21 72 14 C74 6 76 1 84 1 Z" fill="url(#mtg)"/>
<path d="M84 3 H106 C106 12 103 22 92 22 H80 C78 22 78 19 79 15 C80 9 81 5 84 3 Z" fill="#5b5b5b"/>
<path d="M93.700 8.500 V17.500 M89.200 13 H98.200" stroke="#e8e8e8" stroke-width="2.6" fill="none"/>
<path d="M134.500 7.500 L139.300 12.500 L144 7.500 M134.500 15 L139.300 20 L144 15" stroke="#e6e6e6" stroke-width="3" fill="none"/>
</svg>
<div class="abs" style="left:30.500px;top:748px;font-size:15px;line-height:20px;font-weight:bold;color:#fff;white-space:nowrap">模型</div>
<div class="sg" style="left:157px;width:228px"></div><div class="sg" style="left:387px;width:35px"></div><div class="sg" style="left:424px;width:80px"></div><div class="sg" style="left:506px;width:31px"></div><div class="sg" style="left:538px;width:30px"></div><div class="sg" style="left:569px;width:128px"></div><div class="sg" style="left:698px;width:78px"></div><div class="sg" style="left:777px;width:49px"></div><div class="sg" style="left:827px;width:30px"></div><div class="sg" style="left:858px;width:30px"></div><div class="sg" style="left:889px;width:50px"></div><div class="sg" style="left:941px;width:125px"></div><div class="st" style="left:489.5px"></div><div class="st" style="left:633.5px"></div><div class="st" style="left:682.5px"></div><div class="st" style="left:761.5px"></div><div class="st" style="left:811.5px"></div><div class="st" style="left:924.5px"></div><div class="st" style="left:1005.5px"></div><div class="st" style="left:1053.5px"></div>
<div class="abs" id="coords" style="left:189.500px;top:754px;font-size:14.500px;line-height:20px;color:#f6f6f6;white-space:nowrap;letter-spacing:-0.310px">2810.1091, 1196.8474, 0.0000</div>
<div class="abs" style="left:391px;top:753.500px;font-size:14.500px;line-height:20px;color:#f6f6f6;white-space:nowrap">模型</div>


<!-- nav bar icons -->
<svg width="50" height="230" viewBox="1015 405 50 230" style="left:1015px;top:405px">
<g stroke="#5a5d65" stroke-width="1.100" fill="none">
<circle cx="1051" cy="419" r="2.800"/>
<path d="M1031 441 C1031 433 1040 431.500 1046 433 C1052 434.500 1052.500 444 1050 449 C1047 455 1036 455.500 1032.500 450 C1031 447.500 1031 444 1031 441 Z"/>
<circle cx="1041" cy="443.500" r="7.200"/><circle cx="1041" cy="443.500" r="4"/>
<path d="M1035 478 V489 M1035 486 C1033 483 1030.500 483 1031 486 C1032 491 1034 494 1037 497.500 H1047 C1049.500 494 1051 490 1051 484 C1051 481.500 1048.500 481.500 1048 484 V479.500 C1048 477 1045 477 1045 479.500 V477 C1045 474.500 1042 474.500 1042 477 V476.500 C1042 473.500 1038.500 473.500 1038.500 476.500 V486"/>
<path d="M1026 499 H1056" stroke="#6c6f77"/>
<path d="M1030 503 L1050 527 M1050 503 L1030 527 M1030 503 h4 M1030 503 v4 M1050 503 h-4 M1050 503 v4 M1030 527 h4 M1030 527 v-4 M1050 527 h-4 M1050 527 v-4"/>
<rect x="1041" y="515" width="8" height="7" fill="#7b7e86"/>
<path d="M1040 543 V566 M1037.500 546 L1040 543 L1042.500 546 M1037.500 563 L1040 566 L1042.500 563 M1029 554.800 H1051 M1032 552.500 L1029 554.800 L1032 557 M1048 552.500 L1051 554.800 L1048 557"/>
<ellipse cx="1040" cy="554.800" rx="9.500" ry="4.500"/>
<ellipse cx="1040" cy="554.800" rx="4.500" ry="9.500"/>
<rect x="1029.500" y="584" width="6" height="6"/><rect x="1037.500" y="584" width="6" height="6"/><rect x="1045.500" y="584" width="6" height="6"/>
<rect x="1029.500" y="592.300" width="17" height="13"/>
<path d="M1026 613 H1056" stroke="#6c6f77"/>
<circle cx="1051" cy="619.500" r="2.800"/>
</g>
<g fill="#5a5d65">
<path d="M1038.500 462.500 H1043.500 L1041 465.500 Z"/>
<path d="M1038.500 533 H1043.500 L1041 536 Z"/>
<path d="M1038.500 570.500 H1043.500 L1041 573.500 Z"/>
<path d="M1035 595.500 L1041.500 598.800 L1035 602 Z"/>
</g>
</svg>
<div class="abs" style="left:1060px;top:222px;width:2px;height:490px;background:#2d4558"></div>
<div class="abs" style="left:1061px;top:0;width:1px;height:222px;background:#2a323e"></div>
<!-- status bar icons -->
<svg width="1062" height="38" viewBox="0 745 1062 38" style="left:0;top:745px">
<path d="M431.5 752.5 V771" stroke="#2f80e8" stroke-width="2.2"/><path d="M435.5 752.5 V771" stroke="#2f80e8" stroke-width="2.2"/><path d="M439.5 752.5 V771" stroke="#2f80e8" stroke-width="2.2"/><path d="M443.5 752.5 V771" stroke="#2f80e8" stroke-width="2.2"/><path d="M447.5 752.5 V771" stroke="#2f80e8" stroke-width="2.2"/><path d="M429.500 754.5 H449" stroke="#2f80e8" stroke-width="1.2"/><path d="M429.500 758.2 H449" stroke="#2f80e8" stroke-width="1.2"/><path d="M429.500 761.9 H449" stroke="#2f80e8" stroke-width="1.2"/><path d="M429.500 765.6 H449" stroke="#2f80e8" stroke-width="1.2"/><path d="M429.500 769.3 H449" stroke="#2f80e8" stroke-width="1.2"/><rect x="460.2" y="753.6" width="1.6" height="1.600" fill="#b8b8b8"/><rect x="460.2" y="757.6" width="1.6" height="1.600" fill="#b8b8b8"/><rect x="460.2" y="761.6" width="1.6" height="1.600" fill="#b8b8b8"/><rect x="460.2" y="765.6" width="1.6" height="1.600" fill="#b8b8b8"/><rect x="460.2" y="769.6" width="1.6" height="1.600" fill="#b8b8b8"/><rect x="464.2" y="753.6" width="1.6" height="1.600" fill="#b8b8b8"/><rect x="464.2" y="757.6" width="1.6" height="1.600" fill="#b8b8b8"/><rect x="464.2" y="761.6" width="1.6" height="1.600" fill="#b8b8b8"/><rect x="464.2" y="765.6" width="1.6" height="1.600" fill="#b8b8b8"/><rect x="464.2" y="769.6" width="1.6" height="1.600" fill="#b8b8b8"/><rect x="468.2" y="753.6" width="1.6" height="1.600" fill="#b8b8b8"/><rect x="468.2" y="757.6" width="1.6" height="1.600" fill="#b8b8b8"/><rect x="468.2" y="761.6" width="1.6" height="1.600" fill="#b8b8b8"/><rect x="468.2" y="765.6" width="1.6" height="1.600" fill="#b8b8b8"/><rect x="468.2" y="769.6" width="1.6" height="1.600" fill="#b8b8b8"/><rect x="472.2" y="753.6" width="1.6" height="1.600" fill="#b8b8b8"/><rect x="472.2" y="757.6" width="1.6" height="1.600" fill="#b8b8b8"/><rect x="472.2" y="761.6" width="1.6" height="1.600" fill="#b8b8b8"/><rect x="472.2" y="765.6" width="1.6" height="1.600" fill="#b8b8b8"/><rect x="472.2" y="769.6" width="1.6" height="1.600" fill="#b8b8b8"/><rect x="476.2" y="753.6" width="1.6" height="1.600" fill="#b8b8b8"/><rect x="476.2" y="757.6" width="1.6" height="1.600" fill="#b8b8b8"/><rect x="476.2" y="761.6" width="1.6" height="1.600" fill="#b8b8b8"/><rect x="476.2" y="765.6" width="1.6" height="1.600" fill="#b8b8b8"/><rect x="476.2" y="769.6" width="1.6" height="1.600" fill="#b8b8b8"/>
<!-- note / infer -->
<path d="M524.500 754.500 H527.500 V760.500 H524.500 M523.300 753.500 V765" stroke="#d4d4d4" stroke-width="1.400" fill="none"/>
<rect x="516" y="764.500" width="8" height="7" fill="#cfcfcf"/>
<!-- dyn input -->
<path d="M546.500 754 V762 M542.500 758 H550.500" stroke="#2f80e8" stroke-width="1.800" fill="none"/>
<rect x="548.500" y="764.500" width="15" height="6.500" rx="3.200" fill="#2f80e8"/>
<!-- ortho -->
<path d="M576 754 V770.300 H591.500 M576 764.500 H581.500 V770.300" stroke="#d2d2d2" stroke-width="1.500" fill="none"/>
<!-- polar -->
<path d="M618.500 754 A9.200 9.200 0 1 0 622.600 762" stroke="#2f80e8" stroke-width="2" fill="none"/>
<path d="M612.500 761.800 H624" stroke="#2f80e8" stroke-width="2" fill="none"/>
<!-- otrack -->
<path d="M662.600 750 V773.500 M652.500 752.500 L672.500 773" stroke="#a6a6a6" stroke-width="1.600" fill="none"/>
<!-- angle -->
<path d="M702.500 770.300 H721 M702.500 770.300 L719.500 755.500" stroke="#2f80e8" stroke-width="2.200" fill="none"/>
<path d="M708.500 765 L713 759 L715 764 Z" fill="#2f80e8"/>
<!-- osnap -->
<rect x="735.500" y="755.500" width="15.500" height="15.500" fill="none" stroke="#2f80e8" stroke-width="2.400"/>
<circle cx="737" cy="756.500" r="2.800" fill="#22c52a" stroke="#1b2a1b" stroke-width="1"/>
<!-- lineweight -->
<rect x="782" y="754.500" width="19.500" height="3" fill="#d2d2d2"/>
<rect x="782" y="759.800" width="11" height="4" fill="#d2d2d2"/>
<rect x="793" y="760.500" width="8.500" height="1.500" fill="#a8a8a8"/>
<rect x="782" y="765.700" width="11" height="4.600" fill="#d2d2d2"/>
<rect x="793" y="764.500" width="8.500" height="1.200" fill="#8a8a8a"/>
<!-- transparency -->
<rect x="832.500" y="752.700" width="18.500" height="20.300" fill="#2f80e8"/>
<rect x="834.2" y="754.0" width="1.8" height="1.8" fill="#1d5fc0"/><rect x="834.2" y="759.8" width="1.8" height="1.8" fill="#1d5fc0"/><rect x="834.2" y="765.6" width="1.8" height="1.8" fill="#1d5fc0"/><rect x="834.2" y="771.4" width="1.8" height="1.8" fill="#1d5fc0"/><rect x="837.2" y="756.9" width="1.8" height="1.8" fill="#1d5fc0"/><rect x="837.2" y="762.7" width="1.8" height="1.8" fill="#1d5fc0"/><rect x="837.2" y="768.5" width="1.8" height="1.8" fill="#1d5fc0"/><rect x="840.2" y="754.0" width="1.8" height="1.8" fill="#1d5fc0"/><rect x="840.2" y="759.8" width="1.8" height="1.8" fill="#1d5fc0"/><rect x="840.2" y="765.6" width="1.8" height="1.8" fill="#1d5fc0"/><rect x="840.2" y="771.4" width="1.8" height="1.8" fill="#1d5fc0"/><rect x="843.2" y="756.9" width="1.8" height="1.8" fill="#1d5fc0"/><rect x="843.2" y="762.7" width="1.8" height="1.8" fill="#1d5fc0"/><rect x="843.2" y="768.5" width="1.8" height="1.8" fill="#1d5fc0"/><rect x="846.2" y="754.0" width="1.8" height="1.8" fill="#1d5fc0"/><rect x="846.2" y="759.8" width="1.8" height="1.8" fill="#1d5fc0"/><rect x="846.2" y="765.6" width="1.8" height="1.8" fill="#1d5fc0"/><rect x="846.2" y="771.4" width="1.8" height="1.8" fill="#1d5fc0"/><rect x="849.2" y="756.9" width="1.8" height="1.8" fill="#1d5fc0"/><rect x="849.2" y="762.7" width="1.8" height="1.8" fill="#1d5fc0"/><rect x="849.2" y="768.5" width="1.8" height="1.8" fill="#1d5fc0"/>
<!-- selection cycling -->
<path d="M866 753.800 V760.800 M862.500 757.300 H869.500" stroke="#d8d8d8" stroke-width="1.300" fill="none"/>
<rect x="868.300" y="759.500" width="10.500" height="10.500" fill="#86b868" stroke="#5d8a4c" stroke-width="1"/>
<rect x="870.800" y="762" width="10" height="10" fill="#9fd07f" stroke="#6a9a56" stroke-width="1"/>
<!-- 3d osnap cube -->
<path d="M904.200 754 L913 758.500 V767.500 L904.200 772 L895.500 767.500 V758.500 Z M895.500 758.500 L904.200 763 L913 758.500 M904.200 763 V772" stroke="#c8c8c8" stroke-width="1.600" fill="none" stroke-linejoin="round"/>
<rect x="894.500" y="754.800" width="5" height="5" fill="#2cc032" stroke="#111" stroke-width="1"/>
<!-- dyn ucs -->
<path d="M947.600 753.400 V770.700 H964.300" stroke="#2f80e8" stroke-width="2" fill="none"/>
<path d="M950.500 768 L958 759.500 L956 757.500 L963.500 754 L962 762 L960 760 L952.500 768.500 Z" fill="#2f80e8"/>
<!-- gray cube -->
<path d="M985.800 754 L994.800 758.500 V767.500 L985.800 772 L977 767.500 V758.500 Z M977 758.500 L985.800 763 L994.800 758.500 M985.800 763 V772" stroke="#a4a4a4" stroke-width="1.500" fill="none" stroke-linejoin="round"/>
<!-- gizmo -->
<path d="M1034.300 754.500 L1042.500 759 V767.500 L1034.300 772 L1026.200 767.500 V759 Z" stroke="#a8a8a8" stroke-width="1.500" fill="none" stroke-linejoin="round"/>
<path d="M1034.300 756 V763" stroke="#5a8fe0" stroke-width="1.500"/>
<circle cx="1034.300" cy="754.500" r="2" fill="#4d86e0"/>
<circle cx="1027" cy="767" r="2" fill="#3fae3f"/>
<circle cx="1042" cy="767.500" r="2.200" fill="#e03030"/>
<circle cx="1034.300" cy="764" r="1.800" fill="#f2f2f2" stroke="#777" stroke-width="0.600"/>
</svg>
<div class="abs" id="leftline"></div>
</body>
</html>
